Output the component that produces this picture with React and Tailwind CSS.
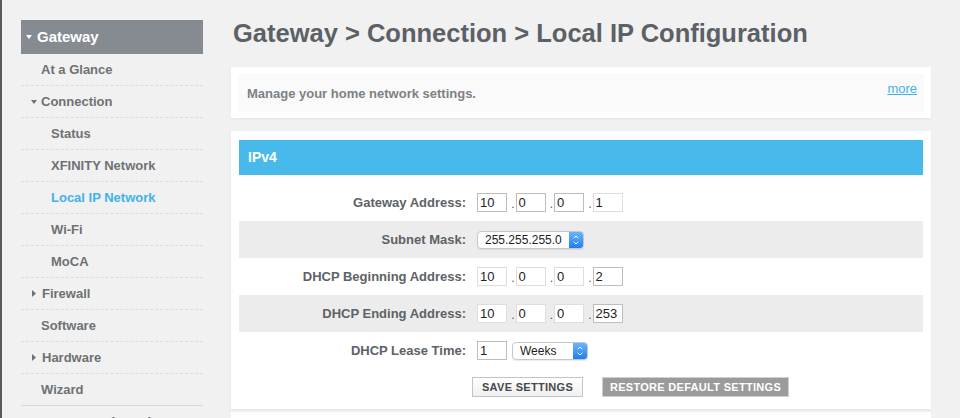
import { ChevronDown, ChevronUp } from 'lucide-react'

const subItems = [
  { label: 'Status' },
  { label: 'XFINITY Network' },
  { label: 'Local IP Network', active: true },
  { label: 'Wi-Fi' },
  { label: 'MoCA' },
]

function CaretDown({ className }) {
  return (
    <svg width="6" height="4" viewBox="0 0 6 4" className={className}>
      <path d="M0 0h6L3 4z" fill="currentColor" />
    </svg>
  )
}

function CaretRight({ className }) {
  return (
    <svg width="4" height="7" viewBox="0 0 4 7" className={className}>
      <path d="M0 0l4 3.5L0 7z" fill="currentColor" />
    </svg>
  )
}

function NavRow({ children, last }) {
  return (
    <div
      className={`flex h-[32px] items-center border-b text-[13px] font-bold ${last ? 'border-solid border-[#d8d8d8]' : 'border-dashed border-[#dcdcdc]'}`}
    >
      {children}
    </div>
  )
}

function Sidebar() {
  return (
    <aside className="w-[229px] shrink-0 pl-[19px] pt-[20px]">
      <div className="w-[182px] text-[#6e7174]">
        <div className="flex h-[34px] items-center bg-[#858b90] pl-[5px] text-[15px] font-bold text-white">
          <CaretDown className="mr-[5px] text-white" />
          Gateway
        </div>
        <NavRow>
          <span className="pl-[20px]">At a Glance</span>
        </NavRow>
        <NavRow>
          <CaretDown className="ml-[10px] mr-[4px] text-[#6e7174]" />
          <span>Connection</span>
        </NavRow>
        {subItems.map((item) => (
          <NavRow key={item.label}>
            <span className={`pl-[30px] ${item.active ? 'text-[#42b2e8]' : ''}`}>{item.label}</span>
          </NavRow>
        ))}
        <NavRow>
          <CaretRight className="ml-[11px] mr-[6px] text-[#6e7174]" />
          <span>Firewall</span>
        </NavRow>
        <NavRow>
          <span className="pl-[20px]">Software</span>
        </NavRow>
        <NavRow>
          <CaretRight className="ml-[11px] mr-[6px] text-[#6e7174]" />
          <span>Hardware</span>
        </NavRow>
        <NavRow last>
          <span className="pl-[20px]">Wizard</span>
        </NavRow>
        <div className="flex h-[34px] items-center pl-[7px] text-[15px] font-bold">
          <CaretRight className="mr-[6px] text-[#6e7174]" />
          Connected Devices
        </div>
      </div>
    </aside>
  )
}

function Octet({ value, light }) {
  return (
    <div
      className={`flex h-[19px] w-[30px] items-center border bg-white pl-[2px] text-[13px] text-[#222] ${light ? 'border-[#dedede]' : 'border-[#bdbdbd]'}`}
    >
      {value}
    </div>
  )
}

function Dot() {
  return <span className="flex h-[19px] w-[8.5px] items-end justify-end pb-[2px] pr-[1px] text-[12px] leading-none text-[#555]">.</span>
}

function IpField({ values, light = [] }) {
  return (
    <div className="flex items-center">
      <Octet value={values[0]} light={light[0]} />
      <Dot />
      <Octet value={values[1]} light={light[1]} />
      <Dot />
      <Octet value={values[2]} light={light[2]} />
      <Dot />
      <Octet value={values[3]} light={light[3]} />
    </div>
  )
}

function MacSelect({ value, width }) {
  return (
    <div
      className={`flex h-[18px] items-stretch overflow-hidden rounded-[4px] border border-[#c6c6c6] bg-white shadow-[0_1px_1px_rgba(0,0,0,0.08)] ${width}`}
    >
      <div className="flex flex-1 items-center pl-[7px] text-[12px] text-[#222]">{value}</div>
      <div className="flex w-[14px] flex-col items-center justify-center bg-gradient-to-b from-[#6cb3fa] to-[#1a7ef5] text-white">
        <ChevronUp size={8} strokeWidth={3} className="-mb-[1px]" />
        <ChevronDown size={8} strokeWidth={3} className="-mt-[1px]" />
      </div>
    </div>
  )
}

function FormRow({ label, shaded, children }) {
  return (
    <div className={`flex h-[37px] items-center ${shaded ? 'bg-[#ececec]' : ''}`}>
      <div className="w-[228px] pr-[1px] text-right text-[13px] font-bold text-[#5d6267]">{label}</div>
      <div className="ml-[10px]">{children}</div>
    </div>
  )
}

export default function App() {
  return (
    <div
      className="flex h-[418px] w-full overflow-hidden border-l-2 border-[#5a5a5a] bg-[#f1f1f1]"
      style={{ fontFamily: '"Liberation Sans", Arial, sans-serif' }}
    >
      <Sidebar />
      <main className="w-[700px] shrink-0">
        <h1 className="pl-[2px] pt-[18px] text-[25.5px] font-bold leading-[30px] text-[#5b6166]">
          Gateway &gt; Connection &gt; Local IP Configuration
        </h1>

        <section className="mt-[19px] bg-white p-[7px] pb-[6px] shadow-[0_1px_2px_rgba(0,0,0,0.06)]">
          <div className="flex h-[38px] items-start justify-between bg-[#fafafa] pl-[9px] pr-[7px]">
            <p className="self-center pt-[1px] text-[13px] font-bold text-[#7c8186]">Manage your home network settings.</p>
            <a href="#" className="mt-[5px] text-[13px] text-[#42b2e8] underline">
              more
            </a>
          </div>
        </section>

        <section className="mt-[13px] bg-white px-[8px] pb-[12px] pt-[9px] shadow-[0_1px_2px_rgba(0,0,0,0.06)]">
          <div className="flex h-[35px] items-center bg-[#47b9eb] pl-[9px] text-[14px] font-bold text-white">IPv4</div>
          <div className="mt-[9px]">
            <FormRow label="Gateway Address:">
              <IpField values={['10', '0', '0', '1']} light={[false, false, false, true]} />
            </FormRow>
            <FormRow label="Subnet Mask:" shaded>
              <MacSelect value="255.255.255.0" width="w-[107px]" />
            </FormRow>
            <FormRow label="DHCP Beginning Address:">
              <IpField values={['10', '0', '0', '2']} light={[true, true, true, false]} />
            </FormRow>
            <FormRow label="DHCP Ending Address:" shaded>
              <IpField values={['10', '0', '0', '253']} light={[true, true, true, false]} />
            </FormRow>
            <FormRow label="DHCP Lease Time:">
              <div className="flex items-center gap-[5px]">
                <Octet value="1" />
                <MacSelect value="Weeks" width="w-[76px]" />
              </div>
            </FormRow>
          </div>
          <div className="mt-[8px] flex gap-[19px] pl-[233px]">
            <button
              type="button"
              className="h-[20px] w-[111px] border border-[#c4c4c4] bg-gradient-to-b from-white to-[#f0f0f0] text-[11px] font-bold tracking-[0.3px] text-[#45494d]"
            >
              SAVE SETTINGS
            </button>
            <button
              type="button"
              className="h-[20px] w-[187px] border border-[#cfcfcf] bg-[#9b9b9b] text-[11px] font-bold tracking-[0.3px] text-white"
            >
              RESTORE DEFAULT SETTINGS
            </button>
          </div>
        </section>
        <section className="mt-[3px] h-[20px] bg-white" />
      </main>
    </div>
  )
}
